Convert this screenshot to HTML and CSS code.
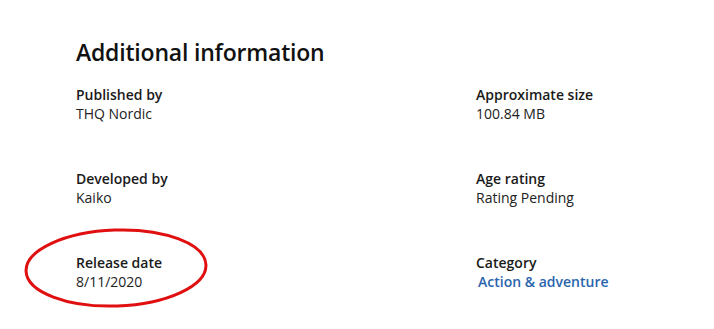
FILE: index.html
```html
<!DOCTYPE html>
<html lang="en">
<head>
    <meta charset="utf-8">
    <title>Additional information</title>
    <link rel="stylesheet" href="styles.css">
</head>
<body>
    <div class="container">
        <h1>Additional information</h1>
        <div class="info-grid">
            <div class="info-item">
                <div class="label">Published by</div>
                <div class="value">THQ Nordic</div>
            </div>
            <div class="info-item">
                <div class="label">Approximate size</div>
                <div class="value">100.84 MB</div>
            </div>
            <div class="info-item">
                <div class="label">Developed by</div>
                <div class="value">Kaiko</div>
            </div>
            <div class="info-item">
                <div class="label">Age rating</div>
                <div class="value">Rating Pending</div>
            </div>
            <div class="info-item marked">
                <div class="label">Release date</div>
                <div class="value">8/11/2020</div>
                <svg class="circle" width="188" height="84" viewBox="0 0 188 84">
                    <ellipse cx="94" cy="42" rx="90" ry="38" fill="none" stroke="#e01010" stroke-width="3" transform="rotate(-2 94 42)"/>
                </svg>
            </div>
            <div class="info-item">
                <div class="label">Category</div>
                <a class="value link" href="#">Action &amp; adventure</a>
            </div>
        </div>
    </div>
</body>
</html>
```

FILE: styles.css
```css
* {
    margin: 0;
    padding: 0;
    box-sizing: border-box;
}

body {
    font-family: "Open Sans", "Noto Sans", sans-serif;
    background: white;
    color: #000;
}

.container {
    padding: 36px 0 0 76px;
}

h1 {
    font-size: 23px;
    font-weight: 600;
    line-height: 32px;
    color: #111;
    letter-spacing: -0.2px;
    margin-bottom: 17px;
}

.info-grid {
    display: grid;
    grid-template-columns: 400px 1fr;
    grid-auto-rows: 84px;
}

.info-item {
    position: relative;
}

.label {
    font-size: 14px;
    font-weight: 600;
    line-height: 19px;
    color: #1a1a1a;
}

.value {
    display: block;
    font-size: 14px;
    line-height: 20px;
    color: #222;
}

.link {
    color: #2a64ad;
    text-decoration: none;
    font-weight: 600;
    margin-left: 2px;
}

.circle {
    position: absolute;
    left: -54px;
    top: -27px;
}
```
